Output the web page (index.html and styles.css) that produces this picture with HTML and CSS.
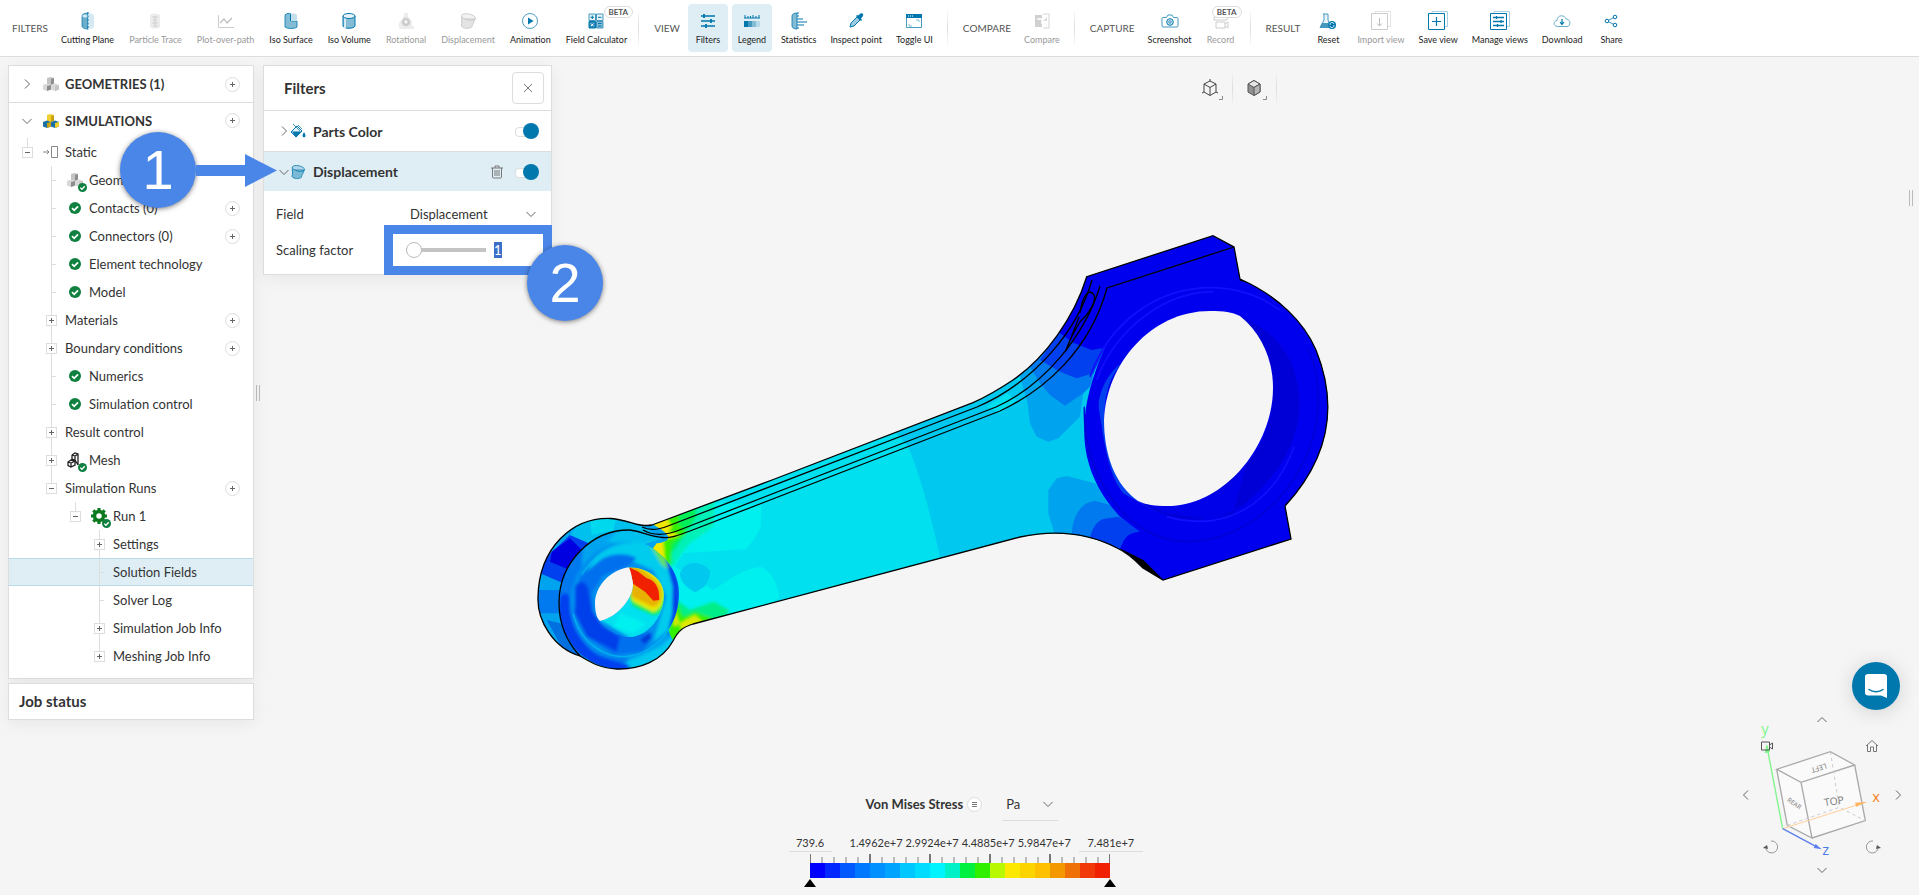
FILE: index.html
```html
<!DOCTYPE html>
<html lang="en">
<head>
<meta charset="utf-8">
<title>Simulation results</title>
<link rel="stylesheet" href="styles.css">
</head>
<body>
<svg class="defs" aria-hidden="true">
  <symbol id="chev-r" viewBox="0 0 12 12"><path d="M4 1.500l4.500 4.500L4 10.500" fill="none" stroke="currentColor"/></symbol>
  <symbol id="chev-l" viewBox="0 0 12 12"><path d="M8 1.500L3.500 6 8 10.500" fill="none" stroke="currentColor"/></symbol>
  <symbol id="chev-d" viewBox="0 0 12 12"><path d="M1.500 4L6 8.500 10.500 4" fill="none" stroke="currentColor"/></symbol>
  <symbol id="chev-u" viewBox="0 0 12 12"><path d="M1.500 8L6 3.500 10.500 8" fill="none" stroke="currentColor"/></symbol>
  <symbol id="plus" viewBox="0 0 9 9"><path d="M2 4.500h5M4.500 2v5" stroke="#666"/></symbol>
  <symbol id="minus" viewBox="0 0 9 9"><path d="M2 4.500h5" stroke="#666"/></symbol>
  <symbol id="check" viewBox="0 0 12 12"><circle cx="6" cy="6" r="6" fill="#0f8040"/><path d="M3 6.200l2.200 2.100L9 4.300" fill="none" stroke="#fff" stroke-width="1.700"/></symbol>
  <symbol id="blocks" viewBox="0 0 16 16">
    <path d="M4 2l3.500-1L11 2v5.500L8 9 4 8z" fill="var(--b1)"/><path d="M8 3l3-1v5.500L8 9z" fill="var(--b3)"/>
    <path d="M0 9l4-1.500L8 9v4.500L4 15l-4-1.500z" fill="var(--b2)"/><path d="M4 10l4-1v4.500L4 15z" fill="var(--b3)"/>
    <path d="M8 9l4-1.500L16 9v4.500L12 15l-4-1.500z" fill="var(--b2)"/><path d="M12 10l4-1v4.500L12 15z" fill="var(--b1)"/>
  </symbol>
  <symbol id="displace" viewBox="0 0 18 18"><path d="M2 6c0 3 1 5 0 8 2 3 8 3 11 1 0-3 3-5 3-9z" fill="currentColor" opacity=".45"/><ellipse cx="9.500" cy="5" rx="7" ry="3" transform="rotate(12 9.500 5)" fill="currentColor" fill-opacity=".2" stroke="currentColor" stroke-width=".8"/><path d="M2.500 4c0 4 1 6-.3 10 2 3 8 3 10.600 1 .2-3 2.800-5 3.200-8.500" fill="none" stroke="currentColor" stroke-width=".8"/></symbol>
</svg>

<header class="toolbar">
  <section class="group wide">
    <h2>FILTERS</h2>
    <button class="tool"><svg viewBox="0 0 18 18"><path d="M3 4c0-2 3-3 6-3v16c-3 0-6-1-6-3z" fill="#6badca" stroke="#0077ad" stroke-width=".7"/><path d="M9 1c3 0 6 1 6 3v10c0 2-3 3-6 3z" fill="#d5e9f2"/><path d="M9 0v18" stroke="#0077ad" stroke-dasharray="2 1.500"/><ellipse cx="6" cy="4" rx="2.600" ry="1.500" fill="#d5e9f2"/></svg>Cutting Plane</button>
    <button class="tool off" disabled><svg viewBox="0 0 18 18"><path d="M4 3c3-2 7-2 10 0v12c-3 2-7 2-10 0z" fill="#ececec"/><path d="M6 5h6M7 8h4M6 11h6M7 14h5M9 4v10" stroke="#d0d0d0"/></svg>Particle Trace</button>
    <button class="tool off" disabled><svg viewBox="0 0 18 18"><path d="M1.500 3v12.500H17" fill="none" stroke="#ccc"/><path d="M3 11l4-4 3 4 5-5" fill="none" stroke="#bbb" stroke-width="1.200"/></svg>Plot-over-path</button>
    <button class="tool"><svg viewBox="0 0 18 18"><path d="M3 3c2-2 4-2 6-1v7h6v6c-3 2-9 2-12 0z" fill="#84bcd6" stroke="#0077ad" stroke-width=".8"/><path d="M9 2c3-1 5 0 6 1v6H9z" fill="#c2dfec"/><path d="M8.500 2v7" stroke="#0077ad"/></svg>Iso Surface</button>
    <button class="tool"><svg viewBox="0 0 18 18"><path d="M3 4v10c1 3 11 3 12 0V4z" fill="#84bcd6" stroke="#0077ad"/><path d="M6 6v10H4V6z" fill="#d5e9f2"/><ellipse cx="9" cy="4" rx="6" ry="2.500" fill="#e7f3f8" stroke="#0077ad"/></svg>Iso Volume</button>
    <button class="tool off" disabled><svg viewBox="0 0 18 18"><path d="M7 1h4v4l4 5v4h2v3H3C0 13 2 9 6 7z" fill="#ededed"/><circle cx="9" cy="10" r="4.500" fill="#d4d4d4"/><path d="M7 12V9l2-2 2 2v3z" fill="#f5f5f5" stroke="#aaa" stroke-width=".6"/></svg>Rotational</button>
    <button class="tool off gray" disabled><svg><use href="#displace"/></svg>Displacement</button>
    <button class="tool"><svg viewBox="0 0 18 18"><circle cx="9" cy="9" r="7.500" fill="#fff" stroke="#3a93bd" stroke-width=".9"/><path d="M7 5.500l5.500 3.500L7 12.500z" fill="#0077ad"/></svg>Animation</button>
    <button class="tool"><svg viewBox="0 0 18 18"><path d="M2 2h6.500v6.500H2zM9.500 2H16v6.500H9.500z" fill="#e8f3f8" stroke="#4598c0"/><path d="M2 9.500h6.500V16H2z" fill="#2b8ab8" stroke="#0077ad"/><path d="M9.500 9.500H16V16H9.500z" fill="#84bcd6" stroke="#4598c0"/><path d="M3.500 5.300H7M5.300 3.500V7M11 5.300h3.500M11 11.500h3.500M11 14h3.500" stroke="#0077ad"/><path d="M4 11.500l2.500 2.500M6.500 11.500L4 14" stroke="#fff"/></svg>Field Calculator<span class="beta">BETA</span></button>
  </section>
  <section class="group">
    <h2>VIEW</h2>
    <button class="tool on"><svg viewBox="0 0 18 18"><path d="M2 4h14M2 9h14M2 14h14" stroke="#0077ad" stroke-width="1.400"/><path d="M5 2v4M12 7v4M7 12v4" stroke="#0077ad" stroke-width="1.800"/></svg>Filters</button>
    <button class="tool on"><svg viewBox="0 0 18 18"><path d="M1 6h16M2 3v3M5 4v2M7.500 4v2M10 3v3M13 4v2M16 3v3" stroke="#0077ad"/><path d="M1 9h4v6H1z" fill="#0077ad"/><path d="M5 9h4v6H5z" fill="#4598c0"/><path d="M9 9h4v6H9z" fill="#84bcd6"/><path d="M13 9h4v6h-4z" fill="#b7d9e8"/></svg>Legend</button>
    <button class="tool"><svg viewBox="0 0 18 18"><path d="M7 1C4 1 2 2 2 4v10c0 2 2 3 5 3z" fill="#84bcd6" stroke="#0077ad" stroke-width=".8"/><path d="M8 0v18" stroke="#0077ad" stroke-dasharray="2 1"/><path d="M9 7h4M9 10h8M9 13h5" stroke="#0077ad" stroke-width="1.200"/></svg>Statistics</button>
    <button class="tool"><svg viewBox="0 0 18 18"><path d="M3 15l1-4 6-6 3 3-6 6z" fill="#9ccade" stroke="#0077ad"/><path d="M9 4l5 5 1-1-1-1.500 2-2.500c1-2-1-3.500-2.500-2.500L11 3.500 10 3z" fill="#0077ad"/></svg>Inspect point</button>
    <button class="tool"><svg viewBox="0 0 18 18"><path d="M1.500 2.500h15v13h-15z" fill="#fff" stroke="#4598c0"/><path d="M1 2h16v4H1z" fill="#0077ad"/><path d="M3 4h1M5 4h1M7 4h1" stroke="#fff"/><path d="M4 12v2h3M11 8h3v2" fill="none" stroke="#84bcd6"/></svg>Toggle UI</button>
  </section>
  <section class="group">
    <h2>COMPARE</h2>
    <button class="tool off" disabled><svg viewBox="0 0 18 18"><path d="M2 3h7v12H2z" fill="#d0d0d0"/><path d="M10 2h6v14h-6" fill="none" stroke="#d4d4d4"/><path d="M4 7h5v5M13 5l-3 4" fill="none" stroke="#fff" stroke-width="1.500"/><path d="M10 9l4-4v4z" fill="#ddd"/></svg>Compare</button>
  </section>
  <section class="group">
    <h2>CAPTURE</h2>
    <button class="tool"><svg viewBox="0 0 18 18"><path d="M2 5.500h3.500L7 3h4l1.500 2.500H16c.6 0 1 .4 1 1V14c0 .6-.4 1-1 1H2c-.6 0-1-.4-1-1V6.500c0-.6.4-1 1-1z" fill="#fff" stroke="#4598c0"/><circle cx="9" cy="10" r="3.300" fill="#d5e9f2" stroke="#0077ad"/><circle cx="9" cy="10" r="1.300" fill="none" stroke="#4598c0"/></svg>Screenshot</button>
    <button class="tool off" disabled><svg viewBox="0 0 18 18"><path d="M4 10h9v6H4zM13 12l3-2v6l-3-2M2 5h13v3H2z" fill="#fff" stroke="#ccc"/></svg>Record<span class="beta">BETA</span></button>
  </section>
  <section class="group">
    <h2>RESULT</h2>
    <button class="tool"><svg viewBox="0 0 18 18"><path d="M4 2h5M5 2v6l-4 7.500h10V13L9 8V2" fill="#eaf4f9" stroke="#4598c0"/><path d="M3 11h6v4.500H1z" fill="#4598c0"/><circle cx="13" cy="13" r="4" fill="#0077ad"/><path d="M11 13a2 2 0 0 1 4-1M15 13a2 2 0 0 1-4 1" fill="none" stroke="#fff" stroke-width=".8"/></svg>Reset</button>
    <button class="tool off" disabled><svg viewBox="0 0 18 18"><path d="M3 2V-.500h15.500v15H16" fill="none" stroke="#e4e4e4"/><path d="M-.500 1.500h16v16h-16z" fill="#fff" stroke="#ccc"/><path d="M7.500 6v8M5 11.500l2.500 2.500 2.500-2.500" fill="none" stroke="#bbb"/></svg>Import view</button>
    <button class="tool"><svg viewBox="0 0 18 18"><path d="M3 2V-.500h15.500v15H16" fill="none" stroke="#a9d0e2"/><path d="M-.500 1.500h16v16h-16z" fill="#fff" stroke="#0077ad"/><path d="M7.500 5v9M3 9.500h9" stroke="#0077ad" stroke-width="1.200"/></svg>Save view</button>
    <button class="tool"><svg viewBox="0 0 18 18"><path d="M3 2V-.500h15.500v15H16" fill="none" stroke="#a9d0e2"/><path d="M-.500 1.500h16v16h-16z" fill="#fff" stroke="#0077ad"/><path d="M2 5.500h11M2 9.500h11M2 13.500h11M5.500 4v3M10 8v3M6.500 12v3" stroke="#0077ad" stroke-width="1.300"/></svg>Manage views</button>
    <button class="tool"><svg viewBox="0 0 18 18"><path d="M5 14.500C0 14.500 0 9 4 8.500 4 2.500 12 2.500 13 7c5 0 5 7.500 1 7.500z" fill="#fff" stroke="#6badca"/><path d="M9 7v5M7 10l2 2.500 2-2.500" fill="none" stroke="#0077ad" stroke-width="1.200"/></svg>Download</button>
    <button class="tool"><svg viewBox="0 0 18 18"><path d="M5 9l8-4M5 9l8 4" stroke="#4598c0"/><g fill="#fff" stroke="#0077ad"><circle cx="5" cy="9" r="1.800"/><circle cx="13" cy="5" r="1.800"/><circle cx="13" cy="13" r="1.800"/></g></svg>Share</button>
  </section>
</header>

<main class="workspace">
  <svg class="scene" viewBox="0 56 1919 839" role="img" aria-label="Connecting rod stress plot">
    <defs>
      <filter id="soft" x="-5%" y="-5%" width="110%" height="110%"><feGaussianBlur stdDeviation="5"/></filter>
      <clipPath id="rod"><path id="rodshape" d="M538 597C539 548 572 517 611 518.500C630 520 640 528 652 525L772 480 973 402.700C990 395 1001 388 1013 380C1045 358 1074 318 1086.700 276.700L1213 235.700 1234 247 1240 279C1278 296 1304 322 1316 350C1337 402 1332 455 1285 506L1291 539 1163 580 1143 568C1130 555 1124 551 1117 548C1090 534 1058 529 1020 537L693 624C683 627 678 631 673 641C662 661 640 669.500 617 669C600 668 592 663 580 656C553 648 537 620 538 597z"/></clipPath>
      <clipPath id="face"><path d="M559 603C559 562 592 529.500 630 530C640 531 654 537 663 538L645 544C668 556 679 575 679 592C679 608 675 620 668 630L673 641C662 661 640 669.500 617 669C585 667 559 640 559 603z"/></clipPath>
      <clipPath id="bore"><path d="M325 262C385 262 432 300 432 345C432 410 385 470 325 472C290 465 250 440 240 423C300 410 350 340 337 300z"/></clipPath>
    </defs>
    <g clip-path="url(#rod)">
      <rect x="530" y="230" width="810" height="445" fill="#00e0ee"/>
      <g transform="translate(640 380) scale(.33333)">
        <path d="M100 360L365 375 362 440C350 470 330 495 315 508L130 520 105 560 220 630 280 590C320 570 340 560 365 562C395 575 412 610 418 655L200 760 0 760 60 450z" fill="#00f0f0"/>
        <g filter="url(#soft)">
        <path d="M110 360L225 350 220 440 150 490 125 520 100 560 70 470z" fill="#00f0b8"/>
        <path d="M60 380L160 350 170 410 130 470 95 520 95 560 60 480 0 450z" fill="#00ee58"/>
        <path d="M20 400L120 375 115 430 140 460 95 490 90 560 30 490z" fill="#30f000"/>
        <path d="M0 430L75 405 95 440 85 455 120 465 70 480 75 560 30 500 0 440z" fill="#f0e800"/>
        <path d="M90 780L110 660 150 690 220 665 268 690 250 720z" fill="#00ee88"/>
        <path d="M80 780L108 665 130 710 165 695 220 715 140 780z" fill="#30f000"/>
        <path d="M130 765L105 690 100 740 165 705 195 732z" fill="#e0e800"/>
        </g>
        <path d="M120 580C135 540 180 540 210 572 210 610 190 625 165 637 145 625 120 610 120 580z" fill="#00c8ee"/>
        <path d="M760 150L805 200C850 310 880 440 902 540L1300 560 1500 0 1000 0z" fill="#00c8ee"/>
        <path d="M1040 80L1100 40 1130 60 1080 100z" fill="#00e0ee"/>
      </g>
      <g transform="translate(980 220) scale(.33333)">
        <path d="M70 500L150 400 260 450 310 520 300 590 265 625 235 655 205 665 170 650 150 610 142 545 120 470z" fill="#00a4ee"/>
        <path d="M275 625L300 590V635z" fill="#00c8ee"/>
        <path d="M205 880L205 810 230 775 260 768 345 790 500 940 400 1000 225 945z" fill="#00a4ee"/>
        <path d="M150 440L200 380 345 450 330 500 310 520 255 557 210 525 180 490z" fill="#007aee"/>
        <path d="M275 945C277 900 290 870 320 850L345 842 390 855 500 940 400 1000z" fill="#007aee"/>
        <path d="M180 420L240 330 380 380 340 460 290 475 240 455z" fill="#0040ee"/>
        <path d="M330 950C340 920 350 905 370 897L415 890 500 940 400 1000z" fill="#0040ee"/>
        <path d="M240 340L280 368 335 390 375 383C290 570 280 740 420 890L480 935C440 940 435 950 415 1000L560 1120 1080 1000 1080 0 250 0z" fill="#0000ee"/>
        <path d="M780 288C900 340 960 430 958 560C955 680 880 790 760 880C640 925 520 880 475 843C660 900 885 740 880 500C878 410 840 340 780 288z" fill="#0000d6"/>
        <path d="M760 880C880 790 955 680 958 560L990 600 900 800 700 900 560 880 475 843C620 880 740 820 800 730" fill="#0000ee" opacity=".8"/>
        <path d="M373 600C373 520 390 470 425 430C380 460 350 530 357 570C370 640 380 760 430 820L540 882 475 843C400 780 373 700 373 600z" fill="#0040ee"/>
        <path d="M330 470C390 300 540 200 700 203C780 205 850 235 900 270M350 480C410 320 560 215 700 215M560 890C740 940 880 850 942 680" fill="none" stroke="#1010fb" stroke-width="5"/>
        <path d="M313 560C305 760 440 965 620 965C830 965 1015 760 1015 540C1015 480 1005 430 985 390" fill="none" stroke="#0000d0" stroke-width="4"/>
        <path d="M780 168L830 195 780 182zM420 985L490 1020 552 1081 490 1045z" fill="#000"/>
      </g>
      <g transform="translate(520 480) scale(.33333)">
        <path d="M40 100H330C440 150 480 180 410 190L130 570 40 500z" fill="#00a4ee"/>
        <path d="M180 125L330 105 400 160 270 165 210 215 140 180z" fill="#00c0ee"/>
        <path d="M210 110L290 110 280 150 215 165z" fill="#00d8ee"/>
        <path d="M70 240L150 165 230 200 130 310 60 280z" fill="#0040ee"/>
        <path d="M95 215L150 175 195 220 150 270 90 245z" fill="#0000e0"/>
        <path d="M50 330L125 330 115 400 60 400z" fill="#007aee"/>
        <path d="M80 420L120 430 200 540 130 510z" fill="#0070e0"/>
      </g>
      <g clip-path="url(#face)">
        <g transform="translate(520 480) scale(.33333)">
          <rect x="100" y="130" width="400" height="450" fill="#00a4ee"/>
          <g filter="url(#soft)">
            <path d="M110 240L190 180 180 330 200 480 330 540 240 580 100 480z" fill="#0078ee"/>
            <path d="M120 350C140 330 150 340 152 380C160 450 200 520 260 535L340 560 270 590 180 550 110 440z" fill="#0040ee"/>
            <path d="M320 545L420 500 480 450 470 530 340 580z" fill="#00c8ee"/>
            <path d="M300 148L430 165 480 240 440 250 380 195 260 185z" fill="#00c0ee"/>
            <ellipse cx="312" cy="360" rx="160" ry="176" transform="rotate(20 312 360)" fill="#0090ee"/>
            <path d="M195 290C220 215 290 175 385 190C440 230 470 280 476 330C478 390 460 430 445 450L400 485 440 350 400 270 330 240 250 270z" fill="#00ccee"/>
            <path d="M385 185L440 225 450 270 425 255z" fill="#60e060"/>
            <path d="M435 230C495 300 490 400 440 470L456 400 458 320z" fill="#0040e8"/>
            <path d="M235 245C260 220 320 215 350 235L320 262 250 285 215 340 225 420 290 460 400 460 370 515 280 525 200 470 160 400 180 290z" fill="#0070ee"/>
            <path d="M165 320C175 300 200 300 205 330L215 390 250 440 300 470 290 515 200 470 165 400z" fill="#0040ea"/>
            <path d="M360 480L390 455 395 475 375 492z" fill="#0038d8"/>
          </g>
          <path d="M185 285C220 225 270 195 340 190M160 400C180 490 260 540 330 528C380 520 430 480 445 450" fill="none" stroke="#00c0f0" stroke-width="4" opacity=".7"/>
        </g>
      </g>
    </g>
    <g transform="translate(520 480) scale(.33333)">
      <g clip-path="url(#bore)">
        <rect x="220" y="240" width="230" height="250" fill="#00e0ee"/>
        <g filter="url(#soft)">
          <path d="M230 415L340 480 250 490z" fill="#0080ee"/>
          <path d="M300 400L380 430 340 460 280 440z" fill="#00f0f0"/>
          <path d="M310 240C400 240 440 290 440 330C440 380 425 400 400 405L340 378 320 330z" fill="#10ee50"/>
          <path d="M320 245C390 260 430 300 432 330C432 370 420 390 400 396L335 362z" fill="#e8e800"/>
          <path d="M325 250C380 270 420 310 424 330C424 365 415 378 398 380L335 350z" fill="#e8b000"/>
        </g>
        <path d="M327 262L355 275 380 295C400 300 412 315 416 335L418 360 400 362 375 335 355 322 340 312z" fill="#f02000"/>
      </g>
      <path d="M325 262C270 270 225 320 225 370C225 400 232 418 240 423C300 410 350 340 337 300C334 280 330 266 325 262z" fill="#f5f5f5"/>
    </g>
    <path d="M1104 420C1106 365 1150 311 1210 311C1224 311 1232 312 1240 316C1262 334 1273 360 1273 388C1273 445 1225 506 1167 506C1155 506 1146 505 1138 501C1115 485 1104 455 1104 420z" fill="#f5f5f5"/>
    <g fill="none" stroke="#000" stroke-width="1.300">
      <use href="#rodshape"/>
      <path d="M580 656C567 642 559 625 559 603C559 562 592 529.500 630 530C640 531 651 537 663 537.500C672 538 676 536 690 531L1000 411C1045 390 1090 350 1107 288L1234 247"/>
      <path d="M642 527C650 531 658 530 668 526L977 407C1035 382 1078 330 1092 280M643 530C655 537 668 535 682 529L996 407C1045 385 1085 335 1100 286"/>
      <path d="M1080 313C1082 300 1085 293 1090 292C1098 294 1096 306 1080 322C1074 332 1068 342 1066 351L1079 317"/>
    </g>
  </svg>

  <aside class="side">
    <nav class="tree panel" aria-label="Project tree">
      <div class="root"><button class="plain"><svg class="s12"><use href="#chev-r"/></svg></button><svg class="s16 gray-b"><use href="#blocks"/></svg><strong>GEOMETRIES (1)</strong><button class="add" aria-label="Add geometry"><svg><use href="#plus"/></svg></button></div>
      <div class="root"><button class="plain"><svg class="s12"><use href="#chev-d"/></svg></button><svg class="s16 color-b"><use href="#blocks"/></svg><strong>SIMULATIONS</strong><button class="add" aria-label="Add simulation"><svg><use href="#plus"/></svg></button></div>
      <ul>
        <li class="d1"><span class="branch end"><button class="box"><svg><use href="#minus"/></svg></button></span><span class="ico"><svg class="s16" viewBox="0 0 16 16"><path d="M0 8h6M4 6l2 2-2 2M8.500 2.500h6v11h-6z" fill="none" stroke="#888"/></svg></span>Static</li>
        <li class="d2"><span class="branch leaf"></span><span class="ico badge"><svg class="s16 gray-b"><use href="#blocks"/></svg><svg class="mini"><use href="#check"/></svg></span>Geometry</li>
        <li class="d2"><span class="branch leaf"></span><span class="ico"><svg class="s12"><use href="#check"/></svg></span>Contacts (0)<button class="add" aria-label="Add contact"><svg><use href="#plus"/></svg></button></li>
        <li class="d2"><span class="branch leaf"></span><span class="ico"><svg class="s12"><use href="#check"/></svg></span>Connectors (0)<button class="add" aria-label="Add connector"><svg><use href="#plus"/></svg></button></li>
        <li class="d2"><span class="branch leaf"></span><span class="ico"><svg class="s12"><use href="#check"/></svg></span>Element technology</li>
        <li class="d2"><span class="branch leaf"></span><span class="ico"><svg class="s12"><use href="#check"/></svg></span>Model</li>
        <li class="d2"><span class="branch"><button class="box"><svg><use href="#plus"/></svg></button></span>Materials<button class="add" aria-label="Add material"><svg><use href="#plus"/></svg></button></li>
        <li class="d2"><span class="branch"><button class="box"><svg><use href="#plus"/></svg></button></span>Boundary conditions<button class="add" aria-label="Add boundary condition"><svg><use href="#plus"/></svg></button></li>
        <li class="d2"><span class="branch leaf"></span><span class="ico"><svg class="s12"><use href="#check"/></svg></span>Numerics</li>
        <li class="d2"><span class="branch leaf"></span><span class="ico"><svg class="s12"><use href="#check"/></svg></span>Simulation control</li>
        <li class="d2"><span class="branch"><button class="box"><svg><use href="#plus"/></svg></button></span>Result control</li>
        <li class="d2"><span class="branch"><button class="box"><svg><use href="#plus"/></svg></button></span><span class="ico badge"><svg class="s16" viewBox="0 0 16 16"><path d="M5 3l3-2 3 1v11M5 3l3 1 3-2M8 4v4L5 7V3M1 10l3-2 4 1v4l-4 2-3-1.500zM1 10l3 1 4-2M4 11v4M8 8l3 5" fill="none" stroke="#222" stroke-width="1.300"/></svg><svg class="mini"><use href="#check"/></svg></span>Mesh</li>
        <li class="d2"><span class="branch end"><button class="box"><svg><use href="#minus"/></svg></button></span>Simulation Runs<button class="add" aria-label="Add run"><svg><use href="#plus"/></svg></button></li>
        <li class="d3"><span class="branch end"><button class="box"><svg><use href="#minus"/></svg></button></span><span class="ico badge"><svg class="s16" viewBox="0 0 16 16"><circle cx="8" cy="8" r="4.500" fill="none" stroke="#0b7a1e" stroke-width="3.500"/><path d="M8 0v3M8 13v3M0 8h3M13 8h3M2.300 2.300l2 2M11.700 11.700l2 2M2.300 13.700l2-2M11.700 4.300l2-2" stroke="#0b7a1e" stroke-width="3.200"/></svg><svg class="mini"><use href="#check"/></svg></span>Run 1</li>
        <li class="d4"><span class="branch"><button class="box"><svg><use href="#plus"/></svg></button></span>Settings</li>
        <li class="d4 selected"><span class="branch leaf"></span>Solution Fields</li>
        <li class="d4"><span class="branch leaf"></span>Solver Log</li>
        <li class="d4"><span class="branch"><button class="box"><svg><use href="#plus"/></svg></button></span>Simulation Job Info</li>
        <li class="d4"><span class="branch end"><button class="box"><svg><use href="#plus"/></svg></button></span>Meshing Job Info</li>
      </ul>
    </nav>
    <section class="job panel">Job status</section>
  </aside>
  <span class="grip grip-left"></span>

  <section class="filters panel" aria-label="Filters">
    <header><h1>Filters</h1><button class="close" aria-label="Close"><svg viewBox="0 0 12 12"><path d="M2 2l8 8M10 2l-8 8" stroke="#777"/></svg></button></header>
    <div class="frow"><button class="plain"><svg class="s12"><use href="#chev-r"/></svg></button><svg class="s16" viewBox="0 0 16 16"><path d="M1 9l6-6 5 5-6 6z" fill="#e4f1f7" stroke="#0077ad"/><path d="M2 8.500h10l-6 6z" fill="#0077ad"/><path d="M3 1l7 7M8 2l4 4" stroke="#4598c0"/><path d="M14 9c1 2 1.500 3 1.500 3.800a1.500 1.500 0 0 1-3 0C12.500 12 13 11 14 9z" fill="#0077ad"/></svg><strong>Parts Color</strong><input type="checkbox" class="switch" checked aria-label="Parts Color"></div>
    <div class="frow active"><button class="plain"><svg class="s12"><use href="#chev-d"/></svg></button><svg class="s16 blue"><use href="#displace"/></svg><strong>Displacement</strong><button class="plain trash" aria-label="Delete"><svg class="s14" viewBox="0 0 14 14"><path d="M1 3h12M5 3V1h4v2M2.500 3v9c0 .6.400 1 1 1h7c.6 0 1-.4 1-1V3M5 5v6M7 5v6M9 5v6" fill="none" stroke="#777"/></svg></button><input type="checkbox" class="switch" checked aria-label="Displacement"></div>
    <div class="fields">
      <label for="field">Field</label>
      <span class="pick"><select id="field"><option>Displacement</option></select><svg class="s12"><use href="#chev-d"/></svg></span>
      <label for="scale">Scaling factor</label>
      <span class="scale"><input id="scale" type="range" min="0" max="100" value="0"><input type="text" class="num" value="1" aria-label="Scaling factor value"></span>
    </div>
    <span class="focus-box"></span>
  </section>

  <div class="modes">
    <button class="plain mode" aria-label="Projection"><svg viewBox="0 0 24 24"><path d="M11 4l6 3v8l-6 3.500L5 15V7zM5 7l6 3.500L17 7M11 10.500v8M11 4V2M5 15l-2 1M17 15l2 1" fill="none" stroke="#444"/><path d="M20 22.500h3.500V19" fill="none" stroke="#888"/></svg></button>
    <button class="plain mode" aria-label="Rendering"><svg viewBox="0 0 24 24"><path d="M11 3.500l6 3.500v8l-6 3.500L5 15V7z" fill="#909290" stroke="#555"/><path d="M11 3.500L17 7l-6 3.500L5 7z" fill="#e4e4e4" stroke="#555"/><path d="M11 10.500L17 7v8l-6 3.500z" fill="#b4b6b4" stroke="#555"/><path d="M20 22.500h3.500V19" fill="none" stroke="#888"/></svg></button>
  </div>
  <span class="grip grip-right"></span>

  <div class="callout one"><span class="num-dot">1</span><svg viewBox="0 0 81 33"><path d="M0 11h49V0l32 16.500L49 33V22H0z" fill="#4a86e8"/></svg></div>
  <div class="callout two"><span class="num-dot">2</span></div>

  <section class="legend" aria-label="Legend">
    <div class="legend-title"><strong>Von Mises Stress</strong><button class="add" aria-label="Legend options"><svg viewBox="0 0 9 9"><path d="M2 2.500h5M2 4.500h5M2 6.500h5" stroke="#555" stroke-width=".8"/></svg></button><span class="pick unit"><select aria-label="Unit"><option>Pa</option></select><svg class="s12"><use href="#chev-d"/></svg></span></div>
    <div class="values"><input class="min" value="739.6" aria-label="Minimum"><span>1.4962e+7</span><span>2.9924e+7</span><span>4.4885e+7</span><span>5.9847e+7</span><input class="max" value="7.481e+7" aria-label="Maximum"></div>
    <svg class="scalebar" viewBox="0 0 300 33" shape-rendering="crispEdges">
      <path d="M11 6H300" stroke="#bbb" stroke-width="6" stroke-dasharray="2 10"/>
      <path d="M.5 0v9M299.500 0v9" stroke="#777"/><path d="M60 0v9M120 0v9M180 0v9M240 0v9" stroke="#777" stroke-width="2"/>
      <g stroke-width="15">
        <path d="M0 16.500h15" stroke="#0000ff"/><path d="M15 16.500h15" stroke="#0028ff"/><path d="M30 16.500h15" stroke="#0058ff"/><path d="M45 16.500h15" stroke="#0078ff"/><path d="M60 16.500h15" stroke="#0090ff"/><path d="M75 16.500h15" stroke="#00a4ff"/><path d="M90 16.500h15" stroke="#00c8ff"/><path d="M105 16.500h15" stroke="#00dcff"/><path d="M120 16.500h15" stroke="#00f4ff"/><path d="M135 16.500h15" stroke="#00f0c8"/><path d="M150 16.500h15" stroke="#00f040"/><path d="M165 16.500h15" stroke="#30f000"/><path d="M180 16.500h15" stroke="#b8f800"/><path d="M195 16.500h15" stroke="#fce800"/><path d="M210 16.500h15" stroke="#fcd400"/><path d="M225 16.500h15" stroke="#ffc000"/><path d="M240 16.500h15" stroke="#f49800"/><path d="M255 16.500h15" stroke="#f07008"/><path d="M270 16.500h15" stroke="#f03808"/><path d="M285 16.500h15" stroke="#f02000"/>
      </g>
      <path d="M-6 33L0 25 6 33zM294 33l6-8 6 8z" shape-rendering="auto"/>
    </svg>
  </section>

  <button class="chat" aria-label="Chat"><svg viewBox="0 0 22 26"><path d="M3 1h16c1.700 0 3 1 3 2.700V25l-6-2.500H3c-1.700 0-3-1-3-2.700V3.700C0 2 1.300 1 3 1z" fill="#fff"/><path d="M4 16.500c4 3 10 3 14 0" fill="none" stroke="#0077ad" stroke-width="1.500" stroke-linecap="round"/></svg></button>

  <div class="orient">
    <svg class="cube" viewBox="51 216 504 498">
      <path d="M167 388L328 335 401 375 433 542 273 594 199 556z" fill="#fafafa"/>
      <g fill="none" stroke="#aaa" stroke-width="4"><path d="M167 388L328 335 401 375 240 427zM167 388L199 556 273 594 240 427M273 594L433 542 401 375"/><path d="M328 335L355 502M199 556L355 502 433 542" stroke-dasharray="10 9" stroke="#ccc" stroke-width="3"/></g>
      <path d="M185 566L138 320" stroke="#7df58a" stroke-width="4"/><path d="M131 340L137 312 147 336z" fill="#7df58a"/>
      <path d="M185 566L436 486" stroke="#ffcf99" stroke-width="3"/><path d="M402 488L436 486 406 500z" fill="#ffb35c"/>
      <path d="M185 566L290 622" stroke="#5b7ff0" stroke-width="4"/><path d="M284 612L302 628 278 624z" fill="#5b7ff0"/>
      <g class="cube-text"><text class="axis y" x="121" y="283">y</text><text class="axis x" x="454" y="487">x</text><text class="axis z" x="304" y="645">z</text>
      <text x="311" y="499" font-size="31" transform="rotate(-9 311 499)">TOP</text><text x="197" y="483" font-size="19" transform="rotate(34 197 483)">REAR</text><text x="314" y="370" font-size="22" transform="rotate(163 314 370)">LEFT</text></g>
    </svg>
    <div class="orow up"><button class="plain" aria-label="Rotate up"><svg class="s12"><use href="#chev-u"/></svg></button></div>
    <div class="orow cam"><button class="plain" aria-label="Camera"><svg class="s14" viewBox="0 0 14 14"><path d="M1.500 3h8v8h-8zM9.500 6l3-2v6l-3-2" fill="none" stroke="#555"/></svg></button><button class="plain" aria-label="Home"><svg class="s14" viewBox="0 0 14 14"><path d="M1 7l6-5.500L13 7M2.500 6v6.500h3V8h3v4.500h3V6" fill="none" stroke="#777"/></svg></button></div>
    <div class="orow mid"><button class="plain" aria-label="Rotate left"><svg class="s12"><use href="#chev-l"/></svg></button><button class="plain" aria-label="Rotate right"><svg class="s12"><use href="#chev-r"/></svg></button></div>
    <div class="orow rot"><button class="plain" aria-label="Roll left"><svg class="s14" viewBox="0 0 14 14"><path d="M7 1a6 6 0 1 1-5 8" fill="none" stroke="#999"/><path d="M-1 8l4-3 1 4z" fill="#555"/></svg></button><button class="plain" aria-label="Roll right"><svg class="s14" viewBox="0 0 14 14"><path d="M7 1a6 6 0 1 0 5 8" fill="none" stroke="#999"/><path d="M15 8l-4-3-1 4z" fill="#555"/></svg></button></div>
    <div class="orow down"><button class="plain" aria-label="Rotate down"><svg class="s12"><use href="#chev-d"/></svg></button></div>
  </div>
</main>
</body>
</html>
```

FILE: styles.css
```css
* { box-sizing: border-box; }
body { margin: 0; min-height: 100vh; display: flex; flex-direction: column; background: #f5f5f5; color: #333; font: 13px Lato, sans-serif; overflow: hidden; }
button, input, select { font: inherit; color: inherit; margin: 0; padding: 0; border: 0; background: none; }
svg { display: block; overflow: visible; flex: none; }
h1, h2, ul { margin: 0; padding: 0; list-style: none; }
.defs { position: absolute; width: 0; height: 0; }
.s12 { width: 12px; height: 12px; }
.s14 { width: 14px; height: 14px; }
.s16 { width: 16px; height: 16px; }
.plain { display: flex; align-items: center; justify-content: center; color: #666; }
.blue { color: #0077ad; }
.gray-b { --b1: #c4c4c4; --b2: #d8d8d8; --b3: #8e8e8e; }
.color-b { --b1: #f0cf2d; --b2: #1a6fa5; --b3: #c8a415; }

/* Toolbar */
.toolbar { position: relative; z-index: 2; display: flex; height: 56px; padding-left: 12px; background: #fff; box-shadow: 0 1px #ddd; }
.group { display: flex; align-items: center; gap: 4px; }
.group + .group { margin-left: 9px; padding-left: 16px; background: linear-gradient(#fff, #ddd, #fff) left / 1px 40px no-repeat; }
.group.wide { gap: 5px; }
.group.wide + .group { margin-left: 6px; }
.group h2 { font-size: 10px; font-weight: 400; color: #555; margin-right: 4px; }
.group.wide h2 { margin-right: 3px; }
.tool { position: relative; display: flex; flex-direction: column; align-items: center; gap: 4px; min-width: 40px; height: 48px; padding: 8px 5px 0; border-radius: 4px; font-size: 9px; line-height: 12px; white-space: nowrap; color: #222; }
.tool svg { width: 18px; height: 18px; }
.on { background: #dfeef5; }
.off { color: #999; }
.gray svg { color: #c4c4c4; }
.beta { position: absolute; top: 2px; right: -1px; padding: 0 4px; border: 1px solid #ddd; border-radius: 6px; background: #fff; color: #555; font-size: 8px; font-weight: 700; line-height: 10px; }

/* Workspace */
.workspace { position: relative; flex: 1; display: flex; align-items: flex-start; padding: 9px 6px 8px 8px; }
.scene { position: absolute; inset: 0; width: 100%; height: 100%; }
.panel { background: #fff; border: 1px solid #ddd; box-shadow: 0 4px 16px rgba(0, 0, 0, .06); }
.side { position: relative; width: 246px; display: flex; flex-direction: column; gap: 4px; }
.tree { padding-bottom: 8px; }
.root { display: flex; align-items: center; height: 35px; padding: 0 13px 0 12px; }
.root:first-child { height: 37px; border-bottom: 1px solid #ddd; }
.root strong { margin-left: 6px; }
.root .plain { margin-right: 10px; }
.add { width: 15px; height: 15px; flex: none; display: grid; place-items: center; margin-left: auto; border: 1px solid #ddd; border-radius: 50%; background: #fff; }
.add svg { width: 9px; height: 9px; }
.tree li { display: flex; align-items: center; height: 28px; padding-right: 13px; }
.tree .d1 { padding-left: 13px; }
.tree .d2 { padding-left: 37px; }
.tree .d3 { padding-left: 61px; }
.tree .d4 { padding-left: 85px; }
.branch { width: 11px; height: 28px; margin-right: 8px; display: grid; place-items: center; background: linear-gradient(#ddd, #ddd) 5px 0 / 1px 28px no-repeat; }
.branch.end { background-size: 1px 14px; }
.branch.leaf { background: linear-gradient(#ddd, #ddd) 5px 0 / 1px 28px no-repeat, linear-gradient(#ddd, #ddd) 5px 14px / 5px 1px no-repeat; }
.box { width: 11px; height: 11px; border: 1px solid #ddd; background: #fff; }
.box svg { width: 9px; height: 9px; }
.ico { position: relative; width: 24px; padding-left: 4px; }
.ico .s16 { margin-left: -2px; }
.mini { position: absolute; right: 2px; bottom: -4px; width: 9px; height: 9px; }
.selected { background: #dfeef5; box-shadow: inset 0 1px #b8dcea, inset 0 -1px #b8dcea; }
.job { height: 37px; padding-left: 10px; font-size: 15px; font-weight: 700; line-height: 35px; }
.grip { width: 4px; height: 16px; border: 1px solid #bbb; border-width: 0 1px; }
.grip-left { margin: 320px 3px 0 2px; }

/* Filter panel */
.filters { position: relative; width: 289px; }
.filters header { display: flex; align-items: center; justify-content: space-between; height: 44px; padding: 0 7px 0 20px; }
.filters h1 { font-size: 15px; }
.close { display: grid; place-items: center; width: 32px; height: 32px; border: 1px solid #ddd; border-radius: 4px; }
.close svg { width: 12px; height: 12px; }
.frow { display: flex; align-items: center; height: 41px; padding: 0 12px 0 14px; border-top: 1px solid #ddd; }
.frow strong { margin-left: 7px; font-size: 14px; }
.frow.active { height: 40px; background: #dfeef5; }
.trash { margin-left: auto; margin-right: 11px; }
.switch { appearance: none; position: relative; width: 24px; height: 16px; margin-left: auto; }
.trash + .switch { margin-left: 0; }
.switch::before { content: ""; position: absolute; left: 0; top: 4px; width: 16px; height: 8px; border: 1px solid #ddd; border-radius: 4px; background: #fff; }
.switch::after { content: ""; position: absolute; right: 0; top: 0; width: 16px; height: 16px; border-radius: 50%; background: #0077ad; }
.fields { display: grid; grid-template-columns: 134px 1fr; align-items: center; grid-auto-rows: 36px; padding: 5px 12px 6px; }
.pick { display: grid; grid-template-columns: 1fr; align-items: center; color: #666; }
.pick select, .pick svg { grid-area: 1 / 1; }
.pick svg { justify-self: end; margin-right: 2px; pointer-events: none; }
.pick select { appearance: none; color: #333; }
.scale { display: flex; align-items: center; gap: 8px; margin-left: -4px; }
.scale input[type=range] { appearance: none; width: 80px; height: 16px; background: linear-gradient(#c4c4c4, #c4c4c4) 0 6px / 100% 4px no-repeat; }
.scale input[type=range]::-webkit-slider-thumb { appearance: none; width: 16px; height: 16px; border: 1px solid #bbb; border-radius: 50%; background: #fff; }
.num { width: 8px; height: 16px; background: #3c6fc9; color: #fff; }
.focus-box { position: absolute; right: -1px; bottom: -1px; width: 168px; height: 50px; border: 9px solid #4a86e8; pointer-events: none; }

/* View mode buttons and grips */
.modes { display: flex; margin-left: 637px; padding-top: 6px; }
.mode { width: 44px; height: 36px; background: linear-gradient(#f5f5f5, #ddd, #f5f5f5) right / 1px 100% no-repeat; position: relative; }
.mode svg { width: 24px; height: 24px; }
.grip-right { margin: 125px 0 0 auto; position: relative; }

/* Numbered callouts */
.callout { position: absolute; display: flex; align-items: center; pointer-events: none; }
.num-dot { width: 76px; height: 76px; border-radius: 50%; background: #4a86e8; color: #fff; font: 56px/76px "Liberation Sans", sans-serif; text-align: center; box-shadow: 0 1px 5px rgba(0, 0, 0, .5); }
.callout svg { width: 81px; height: 33px; }
.one { left: 120px; top: 76px; }
.two { left: 527px; top: 189px; }

/* Legend */
.legend { position: absolute; left: calc(50% - 150px); bottom: 8px; width: 300px; }
.legend-title { display: flex; align-items: center; gap: 4px; padding-left: 56px; white-space: nowrap; }
.legend-title .add { margin-left: 0; }
.unit { width: 56px; height: 34px; margin-left: 16px; padding: 0 2px 0 4px; border-bottom: 1px solid #ddd; }
.values { display: flex; align-items: center; gap: 3px; margin: 13px -32px 2px -21px; font-size: 11px; line-height: 16px; }
.values input { height: 18px; text-align: center; border-bottom: 1px solid #ddd; }
.min { width: 43px; margin-right: 15px; }
.max { width: 64px; margin-left: 5px; }
.scalebar { width: 300px; height: 33px; }

/* Chat and orientation cube */
.chat { position: absolute; right: 19px; bottom: 185px; display: grid; place-items: center; width: 48px; height: 48px; border-radius: 50%; background: #0077ad; box-shadow: 0 2px 20px rgba(0, 0, 0, .15); }
.chat svg { width: 22px; height: 26px; }
.orient { position: absolute; right: 13px; bottom: 17px; width: 168px; height: 166px; }
.cube { position: absolute; inset: 0; width: 100%; height: 100%; }
.cube-text { font-family: "Open Sans", sans-serif; fill: #777; }
.axis { font-size: 44px; }
.axis.x { fill: #f58220; }
.axis.y { fill: #7df58a; }
.axis.z { fill: #4f7bea; }
.orow { position: relative; display: flex; justify-content: space-between; height: 16px; }
.up, .down { justify-content: center; }
.orow .plain { width: 16px; height: 16px; }
.cam { margin-top: 10px; padding: 0 26px 0 21px; }
.mid { margin-top: 33px; }
.rot { margin-top: 36px; padding: 0 25px; }
.orow.down { margin-top: 7px; }
```
